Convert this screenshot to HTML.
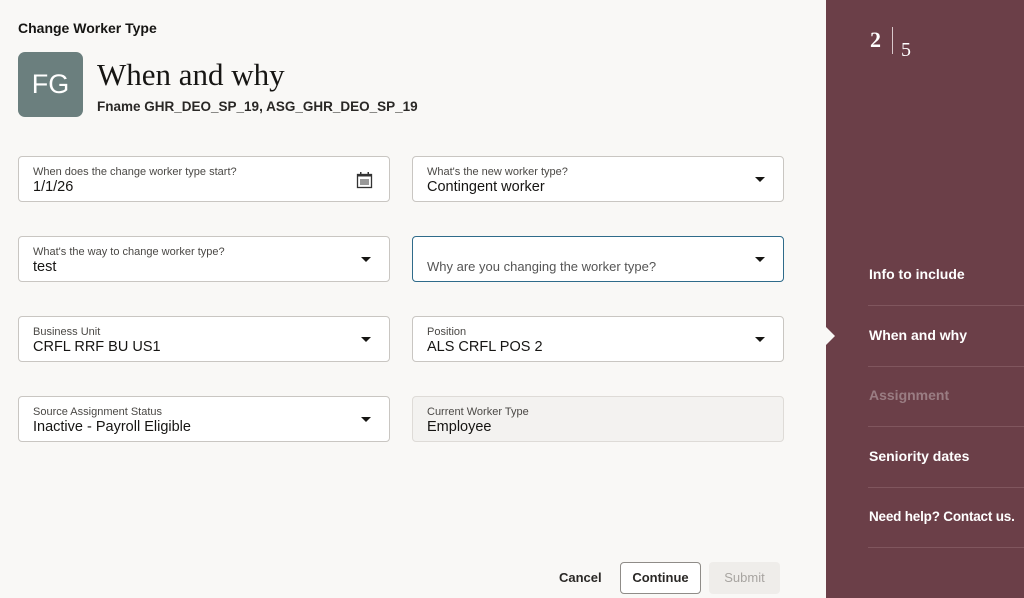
<!DOCTYPE html>
<html><head><meta charset="utf-8"><style>
*{box-sizing:border-box;margin:0;padding:0}
body{width:1024px;height:598px;overflow:hidden;background:#f9f8f6;font-family:"Liberation Sans",sans-serif;position:relative;color:#161513}
.abs{position:absolute}
.f{position:absolute;width:372px;height:46px;border:1px solid #c9c6c2;border-radius:4px;background:#fff}
.f .l{position:absolute;left:14px;top:9px;font-size:11px;color:#4a4845}
.f .v{position:absolute;left:14px;top:22px;font-size:14.5px;color:#161513}
.f .c{position:absolute;right:18px;top:20px;width:0;height:0;border-left:5px solid transparent;border-right:5px solid transparent;border-top:5px solid #161513}
.side{position:absolute;left:826px;top:0;width:198px;height:598px;background:#6b3f48}
.nav{position:absolute;left:43px;font-size:14px;font-weight:bold;color:#fff;white-space:nowrap}
.line{position:absolute;left:42px;right:0;height:1px;background:#80565e}
</style></head><body>
<div class="abs" style="left:18px;top:20px;font-size:14px;font-weight:bold">Change Worker Type</div>
<div class="abs" style="left:18px;top:52px;width:65px;height:65px;border-radius:7px;background:#6b7f7e;color:#fff;font-size:27px;text-align:center;line-height:65px">FG</div>
<div class="abs" style="left:97px;top:57px;font-family:'Liberation Serif',serif;font-size:31px">When and why</div>
<div class="abs" style="left:97px;top:99px;font-size:13.5px;font-weight:bold;color:#2a2826">Fname GHR_DEO_SP_19, ASG_GHR_DEO_SP_19</div>

<div class="f" style="left:18px;top:156px"><div class="l">When does the change worker type start?</div><div class="v">1/1/26</div>
<svg style="position:absolute;right:16px;top:14px" width="17" height="18" viewBox="0 0 17 18"><rect x="1.5" y="3.5" width="14" height="13" fill="none" stroke="#333" stroke-width="1.3"/><rect x="1" y="3" width="15" height="2.5" fill="#333"/><rect x="4" y="1" width="1.5" height="4" fill="#333"/><rect x="11.5" y="1" width="1.5" height="4" fill="#333"/><rect x="4" y="8" width="9" height="6" fill="#999"/></svg></div>
<div class="f" style="left:412px;top:156px"><div class="l">What's the new worker type?</div><div class="v">Contingent worker</div><div class="c"></div></div>
<div class="f" style="left:18px;top:236px"><div class="l">What's the way to change worker type?</div><div class="v">test</div><div class="c"></div></div>
<div class="f" style="left:412px;top:236px;border:1.5px solid #2f6b8a"><div class="v" style="top:22px;font-size:13px;color:#555">Why are you changing the worker type?</div><div class="c"></div></div>
<div class="f" style="left:18px;top:316px"><div class="l">Business Unit</div><div class="v">CRFL RRF BU US1</div><div class="c"></div></div>
<div class="f" style="left:412px;top:316px"><div class="l">Position</div><div class="v">ALS CRFL POS 2</div><div class="c"></div></div>
<div class="f" style="left:18px;top:396px"><div class="l">Source Assignment Status</div><div class="v">Inactive - Payroll Eligible</div><div class="c"></div></div>
<div class="f" style="left:412px;top:396px;background:#f3f2f0;border-color:#dedbd7"><div class="l">Current Worker Type</div><div class="v">Employee</div></div>

<div class="abs" style="left:559px;top:570px;font-size:13px;font-weight:bold;color:#2a2826">Cancel</div>
<div class="abs" style="left:620px;top:562px;width:81px;height:32px;border:1px solid #8f8c88;border-radius:4px;background:#fff;font-size:13px;font-weight:bold;text-align:center;line-height:30px;color:#2a2826">Continue</div>
<div class="abs" style="left:709px;top:562px;width:71px;height:32px;border-radius:4px;background:#efedea;font-size:13px;text-align:center;line-height:32px;color:#a8a5a1">Submit</div>

<div class="side">
<div class="abs" style="left:44px;top:27px;font-family:'Liberation Serif',serif;font-weight:bold;font-size:22px;color:#fff">2</div>
<div class="abs" style="left:66px;top:27px;width:1px;height:27px;background:#d8c8cb"></div>
<div class="abs" style="left:75px;top:39px;font-family:'Liberation Serif',serif;font-size:20px;color:#fff">5</div>
<div class="nav" style="top:266px">Info to include</div>
<div class="line" style="top:305px"></div>
<div class="nav" style="top:327px">When and why</div>
<div class="line" style="top:366px"></div>
<div class="nav" style="top:387px;color:#9a7d83">Assignment</div>
<div class="line" style="top:426px"></div>
<div class="nav" style="top:448px">Seniority dates</div>
<div class="line" style="top:487px"></div>
<div class="nav" style="top:509px;font-size:13.5px;letter-spacing:-0.2px">Need help? Contact us.</div>
<div class="line" style="top:547px"></div>
<div class="abs" style="left:0;top:327px;width:0;height:0;border-top:9px solid transparent;border-bottom:9px solid transparent;border-left:9px solid #f9f8f6"></div>
</div>
</body></html>
